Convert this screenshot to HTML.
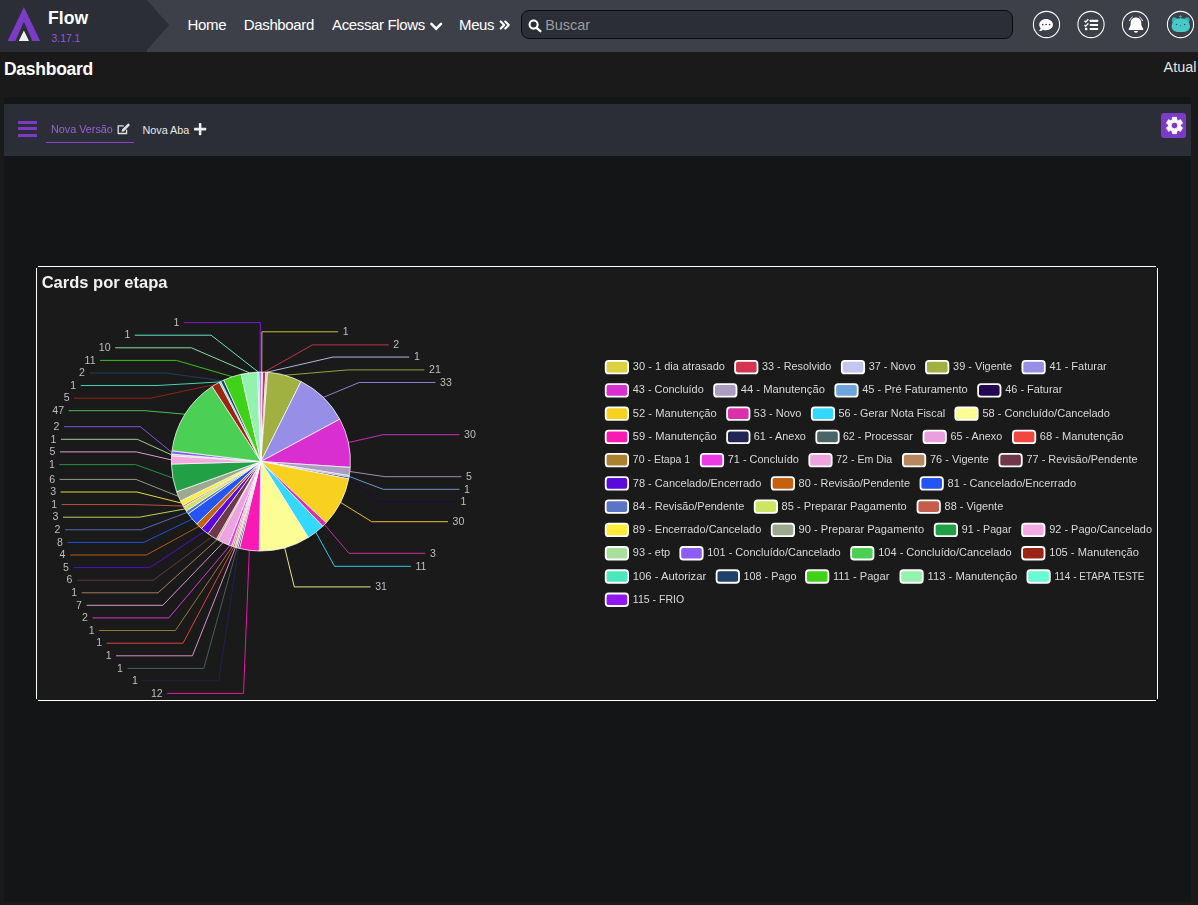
<!DOCTYPE html>
<html lang="pt-br">
<head>
<meta charset="utf-8">
<title>Flow - Dashboard</title>
<style>
*{box-sizing:border-box;margin:0;padding:0}
html,body{width:1198px;height:905px;overflow:hidden;background:#1a1a1a;font-family:"Liberation Sans",sans-serif;color:#fff}
body{position:relative}
.header{position:absolute;left:0;top:0;width:1198px;height:52px;background:#3d4049}
.brand{position:absolute;left:0;top:0;width:170px;height:52px}
.brand-name{position:absolute;left:48px;top:8.3px;font-size:17.6px;font-weight:bold;color:#fff;line-height:20px}
.brand-ver{position:absolute;left:51.5px;top:33px;font-size:10.4px;color:#9256d8;line-height:12px}
.nav{position:absolute;top:0;height:52px;line-height:49.6px;font-size:15px;letter-spacing:-0.36px;color:#fff;white-space:nowrap}
.search{position:absolute;left:521px;top:10px;width:492px;height:29px;border:1px solid #0c0c0e;border-radius:8px;background:#2b2e37}
.search span{position:absolute;left:23.2px;top:0;line-height:28px;font-size:14.4px;color:#9b9b9b}
.circ{position:absolute;top:11px;width:27px;height:27px;border:1.5px solid #fff;border-radius:50%}
.ptitle{position:absolute;left:4px;top:59.3px;font-size:17.5px;letter-spacing:-0.27px;font-weight:bold;line-height:20px;color:#fff}
.atual{position:absolute;right:1.6px;top:58px;font-size:14.4px;line-height:18px;color:#e4e4e4}
.wrap{position:absolute;left:4px;top:97px;width:1187px;height:805px;background:#141517}
.toolbar{position:absolute;left:4px;top:104px;width:1187px;height:52px;background:#2b2e37}
.tab1{position:absolute;left:50.5px;top:122px;font-size:10.8px;line-height:14px;color:#9862d0;white-space:nowrap;will-change:transform}
.tab1u{position:absolute;left:46px;top:142px;width:88px;height:1px;background:#8a44d0}
.tab2{position:absolute;left:142.5px;top:123px;font-size:10.8px;line-height:14px;color:#e8e8e8;white-space:nowrap}
.gear{position:absolute;left:1161px;top:113px;width:25px;height:25px;border-radius:3px;background:#7c3bc6}
.card{position:absolute;left:36px;top:266px;width:1122px;height:435px;border-radius:3px;background:#1a1a1a}
.bl{position:absolute;background:#fff}
svg.chart{position:absolute;left:0;top:0;will-change:transform}
svg.ico{position:absolute;overflow:visible}
</style>
</head>
<body>
<div class="header">
  <svg class="brand" viewBox="0 0 170 52">
    <polygon points="0,0 147,0 169,25 147,50 147,52 0,52" fill="#2b2e37"/>
    <polygon points="23.9,7 40.2,41 32.4,41 23.9,21.8 15.4,41 7.6,41" fill="#7c3bc6"/>
    <polygon points="23.9,30.4 29,41 18.8,41" fill="#f0f0f0"/>
  </svg>
  <div class="brand-name">Flow</div>
  <div class="brand-ver">3.17.1</div>
  <div class="nav" style="left:187.6px">Home</div>
  <div class="nav" style="left:243.8px">Dashboard</div>
  <div class="nav" style="left:332px">Acessar Flows</div>
  <div class="nav" style="left:459px">Meus</div>
  <div class="search">
    <span>Buscar</span>
  </div>
<svg class="ico" style="left:0;top:0" width="1198" height="52" viewBox="0 0 1198 52">
<polyline points="431.4,23.9 436.2,28.7 441,23.9" fill="none" stroke="#fff" stroke-width="2.5" stroke-linecap="round" stroke-linejoin="miter"/>
<g fill="none" stroke="#fff" stroke-width="2.1" stroke-linecap="round" stroke-linejoin="round"><polyline points="500.7,21.5 504.2,25 500.7,28.500"/><polyline points="505.3,21.5 508.8,25 505.3,28.500"/></g>
<circle cx="533.6" cy="24.6" r="4.05" fill="none" stroke="#fff" stroke-width="2.1"/><line x1="536.5" y1="27.9" x2="540.4" y2="31.200" stroke="#fff" stroke-width="2.300" stroke-linecap="round"/>
<g fill="none" stroke="#fff" stroke-width="1.05"><circle cx="1046.5" cy="24.5" r="13.1"/><circle cx="1091" cy="24.5" r="13.1"/><circle cx="1135.5" cy="24.5" r="13.1"/><circle cx="1180.5" cy="24.5" r="13.1"/></g>
<path transform="translate(1039.2 18.1) scale(0.02695)" fill="#fff" fill-rule="evenodd" d="M256 32C114.6 32 0 125.1 0 240c0 49.6 21.4 95 57 130.7C44.5 421.1 2.7 466 2.2 466.5c-2.200 2.300-2.800 5.700-1.500 8.700S4.800 480 8 480c66.300 0 116-31.800 140.600-51.400 32.700 12.300 69 19.400 107.400 19.400 141.400 0 256-93.100 256-208S397.400 32 256 32zM128 272c-17.700 0-32-14.300-32-32s14.300-32 32-32 32 14.300 32 32-14.300 32-32 32zm128 0c-17.700 0-32-14.300-32-32s14.300-32 32-32 32 14.300 32 32-14.300 32-32 32zm128 0c-17.700 0-32-14.300-32-32s14.300-32 32-32 32 14.300 32 32-14.300 32-32 32z"/>
<g fill="#fff"><rect x="1089.700" y="19.800" width="8.400" height="2.100" rx="0.400"/><rect x="1089.700" y="23.900" width="8.400" height="2.100" rx="0.400"/><rect x="1089.700" y="28" width="8.400" height="2.100" rx="0.400"/><rect x="1084.900" y="27.800" width="2.500" height="2.500" rx="1"/></g>
<g fill="none" stroke="#fff" stroke-width="1.400"><polyline points="1084.500,20.800 1085.800,22.100 1088.300,19.300"/><polyline points="1084.500,24.900 1085.800,26.200 1088.300,23.400"/></g>
<path d="M1136 17.400c-3.100 0-5.300 2.200-5.300 5.100c0 3.100-0.600 4.400-1.500 5.500c-0.400 0.500-0.600 0.900-0.600 1.300c0 0.500 0.300 0.800 0.800 0.800h13.200c0.500 0 0.800-0.300 0.800-0.800c0-0.400-0.200-0.800-0.600-1.300c-0.900-1.100-1.500-2.400-1.500-5.500c0-2.900-2.200-5.100-5.300-5.100z" fill="#fff"/>
<path d="M1133.900 31a2.100 1.800 0 0 0 4.200 0z" fill="#fff"/>
<path d="M1129.300 21.100a8 8 0 0 1 3.400-4.300" fill="none" stroke="#fff" stroke-width="0.900"/><path d="M1139.300 16.800a8 8 0 0 1 3.400 4.300" fill="none" stroke="#fff" stroke-width="0.900"/>
<circle cx="1174.400" cy="19.900" r="2.600" fill="#36adb0"/><circle cx="1187.100" cy="19.900" r="2.600" fill="#36adb0"/>
<path d="M1180.400 15v3.500M1178.900 16.500l3 0" stroke="#3bbab8" stroke-width="0.800" fill="none"/>
<path d="M1171.600 26.400C1171.600 21.400 1175.500 18.200 1180.700 18.200C1185.900 18.200 1189.900 21.400 1189.900 26.400C1189.900 30.500 1186 32.100 1180.700 32.100C1175.400 32.100 1171.600 30.500 1171.600 26.400Z" fill="#47c9c7"/>
<circle cx="1176.500" cy="24.600" r="0.750" fill="#1f5558"/><circle cx="1184.600" cy="24.600" r="0.750" fill="#1f5558"/><path d="M1179.800 25.500h1.500l-0.750 1z" fill="#1f4548"/>
</svg>
</div>
<div class="ptitle">Dashboard</div>
<div class="atual">Atual</div>
<div class="wrap"></div>
<div class="toolbar"></div>
<svg class="ico" style="left:18px;top:121px" width="19" height="16" viewBox="0 0 19 16"><rect x="0" y="0" width="19" height="3" rx="0.600" fill="#7c3bc6"/><rect x="0" y="6" width="19" height="3" rx="0.600" fill="#7c3bc6"/><rect x="0" y="13" width="19" height="3" rx="0.600" fill="#7c3bc6"/></svg>
<div class="tab1">Nova Versão</div>
<svg class="ico" style="left:116.500px;top:123px" width="14" height="12" viewBox="0 0 14 12"><path d="M9.600 7.200v3.300H1.200V2.900h5" fill="none" stroke="#e2e2e2" stroke-width="1.300" stroke-linejoin="round" stroke-linecap="round"/><path d="M5 6.600L10.800 0.800c0.300-0.300 0.700-0.300 1 0l0.800 0.800c0.300 0.300 0.300 0.700 0 1L6.800 8.400l-2.200 0.400z" fill="#e2e2e2"/></svg>
<div class="tab1u"></div>
<div class="tab2">Nova Aba</div>
<svg class="ico" style="left:194.100px;top:122.900px" width="12.250" height="12.250" viewBox="0 0 12.250 12.250"><rect x="4.850" y="0" width="2.550" height="12.250" rx="0.700" fill="#ececec"/><rect x="0" y="4.850" width="12.250" height="2.550" rx="0.700" fill="#ececec"/></svg>
<div class="gear">
  <svg class="ico" style="left:4.500px;top:3.800px" width="17" height="17" viewBox="-8.500 -8.500 17 17"><path d="M-2.29 -5.66L-2.03 -8.15L2.03 -8.15L2.29 -5.66L3.76 -4.81L6.04 -5.84L8.07 -2.32L6.04 -0.85L6.04 0.85L8.07 2.32L6.04 5.84L3.76 4.81L2.29 5.66L2.03 8.15L-2.03 8.15L-2.29 5.66L-3.76 4.81L-6.04 5.84L-8.07 2.32L-6.04 0.85L-6.04 -0.85L-8.07 -2.32L-6.04 -5.84L-3.76 -4.81ZM3.3 0A3.3 3.3 0 1 0 -3.3 0A3.3 3.3 0 1 0 3.3 0Z" fill="#fff" fill-rule="evenodd" stroke="#fff" stroke-width="0.8" stroke-linejoin="round"/></svg>
</div>
<div class="card"></div>
<div class="bl" style="left:38px;top:266px;width:1118px;height:1px"></div><div class="bl" style="left:38px;top:700px;width:1118px;height:1px"></div><div class="bl" style="left:36px;top:268px;width:1px;height:431px"></div><div class="bl" style="left:1157px;top:268px;width:1px;height:431px"></div>
<svg class="chart" width="1198" height="905" viewBox="0 0 1198 905">
<g fill="none" stroke-width="1" stroke-opacity="0.9">
<polyline points="261.73,372.05 261.90,331.80 338.20,331.80" stroke="#ddd041"/>
<polyline points="264.23,372.11 312.40,344.90 388.70,344.90" stroke="#d43651"/>
<polyline points="266.72,372.24 333.00,357.05 409.30,357.05" stroke="#c3c6ef"/>
<polyline points="284.73,375.28 348.10,369.90 424.40,369.90" stroke="#a0b142"/>
<polyline points="323.30,397.39 359.10,382.50 435.40,382.50" stroke="#978ee8"/>
<polyline points="348.36,442.56 383.10,434.70 459.40,434.70" stroke="#d92fd0"/>
<polyline points="349.84,471.51 385.10,476.70 461.40,476.70" stroke="#ab9cc1"/>
<polyline points="349.15,476.45 383.10,489.30 459.40,489.30" stroke="#6da6dc"/>
<polyline points="348.86,478.09 379.70,502.10 456.00,502.10" stroke="#220654"/>
<polyline points="340.53,502.40 371.70,521.70 448.00,521.70" stroke="#f8d020"/>
<polyline points="324.48,524.54 349.00,553.30 425.30,553.30" stroke="#dc2fa9"/>
<polyline points="315.77,532.26 334.60,566.30 410.90,566.30" stroke="#34d8fc"/>
<polyline points="284.73,547.82 294.30,586.90 370.60,586.90" stroke="#fcfd94"/>
<polyline points="249.29,550.29 243.50,693.40 167.20,693.40" stroke="#f919b5"/>
<polyline points="238.67,548.25 218.70,680.80 142.40,680.80" stroke="#1f2555"/>
<polyline points="237.07,547.82 203.80,668.40 127.50,668.40" stroke="#4b6567"/>
<polyline points="235.47,547.36 192.40,655.80 116.10,655.80" stroke="#ea9fde"/>
<polyline points="233.88,546.87 183.00,643.20 106.70,643.20" stroke="#f2473e"/>
<polyline points="232.30,546.36 175.40,630.50 99.10,630.50" stroke="#a9812f"/>
<polyline points="229.94,545.53 168.80,617.90 92.50,617.90" stroke="#ec3be6"/>
<polyline points="223.03,542.65 162.80,605.30 86.50,605.30" stroke="#eca3e0"/>
<polyline points="217.11,539.61 158.00,592.80 81.70,592.80" stroke="#b78760"/>
<polyline points="212.13,536.60 153.30,580.20 77.00,580.20" stroke="#6f3848"/>
<polyline points="204.73,531.23 149.80,567.60 73.50,567.60" stroke="#5a0bdb"/>
<polyline points="199.10,526.29 146.30,555.00 70.00,555.00" stroke="#c4600f"/>
<polyline points="192.28,519.01 143.70,542.40 67.40,542.40" stroke="#2255f1"/>
<polyline points="187.24,512.39 141.30,529.80 65.00,529.80" stroke="#5b74c4"/>
<polyline points="184.96,508.92 139.30,517.20 63.00,517.20" stroke="#cde565"/>
<polyline points="183.25,506.06 137.90,504.60 61.60,504.60" stroke="#c65c4b"/>
<polyline points="181.65,503.14 136.90,492.00 60.60,492.00" stroke="#fded3a"/>
<polyline points="178.45,496.38 135.90,479.40 59.60,479.40" stroke="#9ba990"/>
<polyline points="172.94,478.09 135.70,464.60 59.40,464.60" stroke="#21a045"/>
<polyline points="171.42,459.89 136.30,451.90 60.00,451.90" stroke="#f4a9e3"/>
<polyline points="171.65,454.90 137.30,439.30 61.00,439.30" stroke="#aae19a"/>
<polyline points="171.87,452.42 140.30,426.70 64.00,426.70" stroke="#8b5cf6"/>
<polyline points="184.96,414.18 144.90,410.70 68.60,410.70" stroke="#4bd055"/>
<polyline points="215.67,384.32 150.40,398.20 74.10,398.20" stroke="#9c2414"/>
<polyline points="220.05,381.92 157.00,385.50 80.70,385.50" stroke="#4be8bd"/>
<polyline points="222.28,380.81 165.80,373.00 89.50,373.00" stroke="#1f4068"/>
<polyline points="232.30,376.74 176.40,360.40 100.10,360.40" stroke="#3ed316"/>
<polyline points="249.29,372.81 191.40,347.80 115.10,347.80" stroke="#93f2ae"/>
<polyline points="258.40,372.08 211.10,335.20 134.80,335.20" stroke="#69fbd3"/>
<polyline points="260.07,372.05 260.30,322.60 184.00,322.60" stroke="#9018ef"/>
</g>
<g>
<path d="M260.9 461.55L260.90 372.05A89.5 89.5 0 0 1 262.56 372.07Z" fill="#ddd041" stroke="#fff" stroke-width="0.75" stroke-linejoin="round"/>
<path d="M260.9 461.55L262.56 372.07A89.5 89.5 0 0 1 265.89 372.19Z" fill="#d43651" stroke="#fff" stroke-width="0.75" stroke-linejoin="round"/>
<path d="M260.9 461.55L265.89 372.19A89.5 89.5 0 0 1 267.55 372.30Z" fill="#c3c6ef" stroke="#fff" stroke-width="0.75" stroke-linejoin="round"/>
<path d="M260.9 461.55L267.55 372.30A89.5 89.5 0 0 1 301.01 381.54Z" fill="#a0b142" stroke="#fff" stroke-width="0.75" stroke-linejoin="round"/>
<path d="M260.9 461.55L301.01 381.54A89.5 89.5 0 0 1 339.76 419.22Z" fill="#978ee8" stroke="#fff" stroke-width="0.75" stroke-linejoin="round"/>
<path d="M260.9 461.55L339.76 419.22A89.5 89.5 0 0 1 350.21 467.37Z" fill="#d92fd0" stroke="#fff" stroke-width="0.75" stroke-linejoin="round"/>
<path d="M260.9 461.55L350.21 467.37A89.5 89.5 0 0 1 349.29 475.63Z" fill="#ab9cc1" stroke="#fff" stroke-width="0.75" stroke-linejoin="round"/>
<path d="M260.9 461.55L349.29 475.63A89.5 89.5 0 0 1 349.01 477.27Z" fill="#6da6dc" stroke="#fff" stroke-width="0.75" stroke-linejoin="round"/>
<path d="M260.9 461.55L349.01 477.27A89.5 89.5 0 0 1 348.70 478.91Z" fill="#220654" stroke="#fff" stroke-width="0.75" stroke-linejoin="round"/>
<path d="M260.9 461.55L348.70 478.91A89.5 89.5 0 0 1 326.21 522.74Z" fill="#f8d020" stroke="#fff" stroke-width="0.75" stroke-linejoin="round"/>
<path d="M260.9 461.55L326.21 522.74A89.5 89.5 0 0 1 322.70 526.29Z" fill="#dc2fa9" stroke="#fff" stroke-width="0.75" stroke-linejoin="round"/>
<path d="M260.9 461.55L322.70 526.29A89.5 89.5 0 0 1 308.27 537.49Z" fill="#34d8fc" stroke="#fff" stroke-width="0.75" stroke-linejoin="round"/>
<path d="M260.9 461.55L308.27 537.49A89.5 89.5 0 0 1 259.24 551.03Z" fill="#fcfd94" stroke="#fff" stroke-width="0.75" stroke-linejoin="round"/>
<path d="M260.9 461.55L259.24 551.03A89.5 89.5 0 0 1 239.48 548.45Z" fill="#f919b5" stroke="#fff" stroke-width="0.75" stroke-linejoin="round"/>
<path d="M260.9 461.55L239.48 548.45A89.5 89.5 0 0 1 237.87 548.04Z" fill="#1f2555" stroke="#fff" stroke-width="0.75" stroke-linejoin="round"/>
<path d="M260.9 461.55L237.87 548.04A89.5 89.5 0 0 1 236.27 547.59Z" fill="#4b6567" stroke="#fff" stroke-width="0.75" stroke-linejoin="round"/>
<path d="M260.9 461.55L236.27 547.59A89.5 89.5 0 0 1 234.67 547.12Z" fill="#ea9fde" stroke="#fff" stroke-width="0.75" stroke-linejoin="round"/>
<path d="M260.9 461.55L234.67 547.12A89.5 89.5 0 0 1 233.08 546.62Z" fill="#f2473e" stroke="#fff" stroke-width="0.75" stroke-linejoin="round"/>
<path d="M260.9 461.55L233.08 546.62A89.5 89.5 0 0 1 231.51 546.09Z" fill="#a9812f" stroke="#fff" stroke-width="0.75" stroke-linejoin="round"/>
<path d="M260.9 461.55L231.51 546.09A89.5 89.5 0 0 1 228.39 544.94Z" fill="#ec3be6" stroke="#fff" stroke-width="0.75" stroke-linejoin="round"/>
<path d="M260.9 461.55L228.39 544.94A89.5 89.5 0 0 1 217.84 540.01Z" fill="#eca3e0" stroke="#fff" stroke-width="0.75" stroke-linejoin="round"/>
<path d="M260.9 461.55L217.84 540.01A89.5 89.5 0 0 1 216.39 539.20Z" fill="#b78760" stroke="#fff" stroke-width="0.75" stroke-linejoin="round"/>
<path d="M260.9 461.55L216.39 539.20A89.5 89.5 0 0 1 208.02 533.76Z" fill="#6f3848" stroke="#fff" stroke-width="0.75" stroke-linejoin="round"/>
<path d="M260.9 461.55L208.02 533.76A89.5 89.5 0 0 1 201.55 528.54Z" fill="#5a0bdb" stroke="#fff" stroke-width="0.75" stroke-linejoin="round"/>
<path d="M260.9 461.55L201.55 528.54A89.5 89.5 0 0 1 196.74 523.95Z" fill="#c4600f" stroke="#fff" stroke-width="0.75" stroke-linejoin="round"/>
<path d="M260.9 461.55L196.74 523.95A89.5 89.5 0 0 1 188.20 513.75Z" fill="#2255f1" stroke="#fff" stroke-width="0.75" stroke-linejoin="round"/>
<path d="M260.9 461.55L188.20 513.75A89.5 89.5 0 0 1 186.31 511.01Z" fill="#5b74c4" stroke="#fff" stroke-width="0.75" stroke-linejoin="round"/>
<path d="M260.9 461.55L186.31 511.01A89.5 89.5 0 0 1 183.67 506.78Z" fill="#cde565" stroke="#fff" stroke-width="0.75" stroke-linejoin="round"/>
<path d="M260.9 461.55L183.67 506.78A89.5 89.5 0 0 1 182.84 505.34Z" fill="#c65c4b" stroke="#fff" stroke-width="0.75" stroke-linejoin="round"/>
<path d="M260.9 461.55L182.84 505.34A89.5 89.5 0 0 1 180.52 500.92Z" fill="#fded3a" stroke="#fff" stroke-width="0.75" stroke-linejoin="round"/>
<path d="M260.9 461.55L180.52 500.92A89.5 89.5 0 0 1 176.64 491.73Z" fill="#9ba990" stroke="#fff" stroke-width="0.75" stroke-linejoin="round"/>
<path d="M260.9 461.55L176.64 491.73A89.5 89.5 0 0 1 171.43 464.05Z" fill="#21a045" stroke="#fff" stroke-width="0.75" stroke-linejoin="round"/>
<path d="M260.9 461.55L171.43 464.05A89.5 89.5 0 0 1 171.59 455.73Z" fill="#f4a9e3" stroke="#fff" stroke-width="0.75" stroke-linejoin="round"/>
<path d="M260.9 461.55L171.59 455.73A89.5 89.5 0 0 1 171.71 454.07Z" fill="#aae19a" stroke="#fff" stroke-width="0.75" stroke-linejoin="round"/>
<path d="M260.9 461.55L171.71 454.07A89.5 89.5 0 0 1 172.05 450.76Z" fill="#8b5cf6" stroke="#fff" stroke-width="0.75" stroke-linejoin="round"/>
<path d="M260.9 461.55L172.05 450.76A89.5 89.5 0 0 1 212.13 386.50Z" fill="#4bd055" stroke="#fff" stroke-width="0.75" stroke-linejoin="round"/>
<path d="M260.9 461.55L212.13 386.50A89.5 89.5 0 0 1 219.31 382.30Z" fill="#9c2414" stroke="#fff" stroke-width="0.75" stroke-linejoin="round"/>
<path d="M260.9 461.55L219.31 382.30A89.5 89.5 0 0 1 220.79 381.54Z" fill="#4be8bd" stroke="#fff" stroke-width="0.75" stroke-linejoin="round"/>
<path d="M260.9 461.55L220.79 381.54A89.5 89.5 0 0 1 223.79 380.11Z" fill="#1f4068" stroke="#fff" stroke-width="0.75" stroke-linejoin="round"/>
<path d="M260.9 461.55L223.79 380.11A89.5 89.5 0 0 1 241.10 374.27Z" fill="#3ed316" stroke="#fff" stroke-width="0.75" stroke-linejoin="round"/>
<path d="M260.9 461.55L241.10 374.27A89.5 89.5 0 0 1 257.57 372.11Z" fill="#93f2ae" stroke="#fff" stroke-width="0.75" stroke-linejoin="round"/>
<path d="M260.9 461.55L257.57 372.11A89.5 89.5 0 0 1 259.24 372.07Z" fill="#69fbd3" stroke="#fff" stroke-width="0.75" stroke-linejoin="round"/>
<path d="M260.9 461.55L259.24 372.07A89.5 89.5 0 0 1 260.90 372.05Z" fill="#9018ef" stroke="#fff" stroke-width="0.75" stroke-linejoin="round"/>
</g>
<g font-family="Liberation Sans, sans-serif" font-size="10.6" fill="#bebebe">
<text x="342.8" y="335.00">1</text>
<text x="393.3" y="348.10">2</text>
<text x="413.9" y="360.25">1</text>
<text x="429.0" y="373.10">21</text>
<text x="440.0" y="385.70">33</text>
<text x="464.0" y="437.90">30</text>
<text x="466.0" y="479.90">5</text>
<text x="464.0" y="492.50">1</text>
<text x="460.6" y="505.30">1</text>
<text x="452.6" y="524.90">30</text>
<text x="429.9" y="556.50">3</text>
<text x="415.5" y="569.50">11</text>
<text x="375.2" y="590.10">31</text>
<text x="162.7" y="696.60" text-anchor="end">12</text>
<text x="137.9" y="684.00" text-anchor="end">1</text>
<text x="123.0" y="671.60" text-anchor="end">1</text>
<text x="111.6" y="659.00" text-anchor="end">1</text>
<text x="102.2" y="646.40" text-anchor="end">1</text>
<text x="94.6" y="633.70" text-anchor="end">1</text>
<text x="88.0" y="621.10" text-anchor="end">2</text>
<text x="82.0" y="608.50" text-anchor="end">7</text>
<text x="77.2" y="596.00" text-anchor="end">1</text>
<text x="72.5" y="583.40" text-anchor="end">6</text>
<text x="69.0" y="570.80" text-anchor="end">5</text>
<text x="65.5" y="558.20" text-anchor="end">4</text>
<text x="62.9" y="545.60" text-anchor="end">8</text>
<text x="60.5" y="533.00" text-anchor="end">2</text>
<text x="58.5" y="520.40" text-anchor="end">3</text>
<text x="57.1" y="507.80" text-anchor="end">1</text>
<text x="56.1" y="495.20" text-anchor="end">3</text>
<text x="55.1" y="482.60" text-anchor="end">6</text>
<text x="54.9" y="467.80" text-anchor="end">1</text>
<text x="55.5" y="455.10" text-anchor="end">5</text>
<text x="56.5" y="442.50" text-anchor="end">1</text>
<text x="59.5" y="429.90" text-anchor="end">2</text>
<text x="64.1" y="413.90" text-anchor="end">47</text>
<text x="69.6" y="401.40" text-anchor="end">5</text>
<text x="76.2" y="388.70" text-anchor="end">1</text>
<text x="85.0" y="376.20" text-anchor="end">2</text>
<text x="95.6" y="363.60" text-anchor="end">11</text>
<text x="110.6" y="351.00" text-anchor="end">10</text>
<text x="130.3" y="338.40" text-anchor="end">1</text>
<text x="179.5" y="325.80" text-anchor="end">1</text>
</g>
<g font-family="Liberation Sans, sans-serif" font-size="11.5" fill="#d8d8d8">
<rect x="605.7" y="360.90" width="22.4" height="12.5" rx="3" fill="#ddd041" stroke="#fff" stroke-width="1.8"/>
<text x="632.8" y="370.20" textLength="92.2" lengthAdjust="spacingAndGlyphs">30 - 1 dia atrasado</text>
<rect x="735.1" y="360.90" width="22.4" height="12.5" rx="3" fill="#d43651" stroke="#fff" stroke-width="1.8"/>
<text x="762.0" y="370.20" textLength="69.4" lengthAdjust="spacingAndGlyphs">33 - Resolvido</text>
<rect x="841.8" y="360.90" width="22.4" height="12.5" rx="3" fill="#c3c6ef" stroke="#fff" stroke-width="1.8"/>
<text x="868.7" y="370.20" textLength="47.1" lengthAdjust="spacingAndGlyphs">37 - Novo</text>
<rect x="926.0" y="360.90" width="22.4" height="12.5" rx="3" fill="#a0b142" stroke="#fff" stroke-width="1.8"/>
<text x="953.1" y="370.20" textLength="58.9" lengthAdjust="spacingAndGlyphs">39 - Vigente</text>
<rect x="1022.4" y="360.90" width="22.4" height="12.5" rx="3" fill="#978ee8" stroke="#fff" stroke-width="1.8"/>
<text x="1049.5" y="370.20" textLength="57.1" lengthAdjust="spacingAndGlyphs">41 - Faturar</text>
<rect x="605.7" y="384.16" width="22.4" height="12.5" rx="3" fill="#d92fd0" stroke="#fff" stroke-width="1.8"/>
<text x="632.8" y="393.46" textLength="70.9" lengthAdjust="spacingAndGlyphs">43 - Concluído</text>
<rect x="714.1" y="384.16" width="22.4" height="12.5" rx="3" fill="#ab9cc1" stroke="#fff" stroke-width="1.8"/>
<text x="740.8" y="393.46" textLength="84.1" lengthAdjust="spacingAndGlyphs">44 - Manutenção</text>
<rect x="835.3" y="384.16" width="22.4" height="12.5" rx="3" fill="#6da6dc" stroke="#fff" stroke-width="1.8"/>
<text x="862.2" y="393.46" textLength="105.5" lengthAdjust="spacingAndGlyphs">45 - Pré Faturamento</text>
<rect x="978.1" y="384.16" width="22.4" height="12.5" rx="3" fill="#220654" stroke="#fff" stroke-width="1.8"/>
<text x="1005.2" y="393.46" textLength="57.1" lengthAdjust="spacingAndGlyphs">46 - Faturar</text>
<rect x="605.7" y="407.42" width="22.4" height="12.5" rx="3" fill="#f8d020" stroke="#fff" stroke-width="1.8"/>
<text x="632.8" y="416.72" textLength="83.9" lengthAdjust="spacingAndGlyphs">52 - Manutenção</text>
<rect x="727.1" y="407.42" width="22.4" height="12.5" rx="3" fill="#dc2fa9" stroke="#fff" stroke-width="1.8"/>
<text x="753.8" y="416.72" textLength="47.6" lengthAdjust="spacingAndGlyphs">53 - Novo</text>
<rect x="811.8" y="407.42" width="22.4" height="12.5" rx="3" fill="#34d8fc" stroke="#fff" stroke-width="1.8"/>
<text x="838.4" y="416.72" textLength="106.7" lengthAdjust="spacingAndGlyphs">56 - Gerar Nota Fiscal</text>
<rect x="955.3" y="407.42" width="22.4" height="12.5" rx="3" fill="#fcfd94" stroke="#fff" stroke-width="1.8"/>
<text x="982.4" y="416.72" textLength="127.5" lengthAdjust="spacingAndGlyphs">58 - Concluído/Cancelado</text>
<rect x="605.7" y="430.68" width="22.4" height="12.5" rx="3" fill="#f919b5" stroke="#fff" stroke-width="1.8"/>
<text x="632.8" y="439.98" textLength="83.9" lengthAdjust="spacingAndGlyphs">59 - Manutenção</text>
<rect x="727.1" y="430.68" width="22.4" height="12.5" rx="3" fill="#1f2555" stroke="#fff" stroke-width="1.8"/>
<text x="753.8" y="439.98" textLength="52.1" lengthAdjust="spacingAndGlyphs">61 - Anexo</text>
<rect x="816.3" y="430.68" width="22.4" height="12.5" rx="3" fill="#4b6567" stroke="#fff" stroke-width="1.8"/>
<text x="842.9" y="439.98" textLength="69.9" lengthAdjust="spacingAndGlyphs">62 - Processar</text>
<rect x="923.5" y="430.68" width="22.4" height="12.5" rx="3" fill="#ea9fde" stroke="#fff" stroke-width="1.8"/>
<text x="950.6" y="439.98" textLength="51.6" lengthAdjust="spacingAndGlyphs">65 - Anexo</text>
<rect x="1012.9" y="430.68" width="22.4" height="12.5" rx="3" fill="#f2473e" stroke="#fff" stroke-width="1.8"/>
<text x="1039.8" y="439.98" textLength="83.6" lengthAdjust="spacingAndGlyphs">68 - Manutenção</text>
<rect x="605.7" y="453.94" width="22.4" height="12.5" rx="3" fill="#a9812f" stroke="#fff" stroke-width="1.8"/>
<text x="632.8" y="463.24" textLength="57.4" lengthAdjust="spacingAndGlyphs">70 - Etapa 1</text>
<rect x="700.8" y="453.94" width="22.4" height="12.5" rx="3" fill="#ec3be6" stroke="#fff" stroke-width="1.8"/>
<text x="727.7" y="463.24" textLength="71.2" lengthAdjust="spacingAndGlyphs">71 - Concluído</text>
<rect x="809.3" y="453.94" width="22.4" height="12.5" rx="3" fill="#eca3e0" stroke="#fff" stroke-width="1.8"/>
<text x="836.2" y="463.24" textLength="56.0" lengthAdjust="spacingAndGlyphs">72 - Em Dia</text>
<rect x="902.9" y="453.94" width="22.4" height="12.5" rx="3" fill="#b78760" stroke="#fff" stroke-width="1.8"/>
<text x="930.0" y="463.24" textLength="58.9" lengthAdjust="spacingAndGlyphs">76 - Vigente</text>
<rect x="999.4" y="453.94" width="22.4" height="12.5" rx="3" fill="#6f3848" stroke="#fff" stroke-width="1.8"/>
<text x="1026.5" y="463.24" textLength="111.0" lengthAdjust="spacingAndGlyphs">77 - Revisão/Pendente</text>
<rect x="605.7" y="477.20" width="22.4" height="12.5" rx="3" fill="#5a0bdb" stroke="#fff" stroke-width="1.8"/>
<text x="632.8" y="486.50" textLength="128.5" lengthAdjust="spacingAndGlyphs">78 - Cancelado/Encerrado</text>
<rect x="771.7" y="477.20" width="22.4" height="12.5" rx="3" fill="#c4600f" stroke="#fff" stroke-width="1.8"/>
<text x="798.6" y="486.50" textLength="111.4" lengthAdjust="spacingAndGlyphs">80 - Revisão/Pendente</text>
<rect x="920.5" y="477.20" width="22.4" height="12.5" rx="3" fill="#2255f1" stroke="#fff" stroke-width="1.8"/>
<text x="947.6" y="486.50" textLength="128.5" lengthAdjust="spacingAndGlyphs">81 - Cancelado/Encerrado</text>
<rect x="605.7" y="500.46" width="22.4" height="12.5" rx="3" fill="#5b74c4" stroke="#fff" stroke-width="1.8"/>
<text x="632.8" y="509.76" textLength="111.5" lengthAdjust="spacingAndGlyphs">84 - Revisão/Pendente</text>
<rect x="754.7" y="500.46" width="22.4" height="12.5" rx="3" fill="#cde565" stroke="#fff" stroke-width="1.8"/>
<text x="781.6" y="509.76" textLength="125.2" lengthAdjust="spacingAndGlyphs">85 - Preparar Pagamento</text>
<rect x="917.5" y="500.46" width="22.4" height="12.5" rx="3" fill="#c65c4b" stroke="#fff" stroke-width="1.8"/>
<text x="944.6" y="509.76" textLength="58.6" lengthAdjust="spacingAndGlyphs">88 - Vigente</text>
<rect x="605.7" y="523.72" width="22.4" height="12.5" rx="3" fill="#fded3a" stroke="#fff" stroke-width="1.8"/>
<text x="632.8" y="533.02" textLength="128.5" lengthAdjust="spacingAndGlyphs">89 - Encerrado/Cancelado</text>
<rect x="771.7" y="523.72" width="22.4" height="12.5" rx="3" fill="#9ba990" stroke="#fff" stroke-width="1.8"/>
<text x="798.6" y="533.02" textLength="125.5" lengthAdjust="spacingAndGlyphs">90 - Preparar Pagamento</text>
<rect x="934.7" y="523.72" width="22.4" height="12.5" rx="3" fill="#21a045" stroke="#fff" stroke-width="1.8"/>
<text x="961.8" y="533.02" textLength="49.7" lengthAdjust="spacingAndGlyphs">91 - Pagar</text>
<rect x="1022.1" y="523.72" width="22.4" height="12.5" rx="3" fill="#f4a9e3" stroke="#fff" stroke-width="1.8"/>
<text x="1049.2" y="533.02" textLength="102.8" lengthAdjust="spacingAndGlyphs">92 - Pago/Cancelado</text>
<rect x="605.7" y="546.98" width="22.4" height="12.5" rx="3" fill="#aae19a" stroke="#fff" stroke-width="1.8"/>
<text x="632.8" y="556.28" textLength="37.3" lengthAdjust="spacingAndGlyphs">93 - etp</text>
<rect x="680.3" y="546.98" width="22.4" height="12.5" rx="3" fill="#8b5cf6" stroke="#fff" stroke-width="1.8"/>
<text x="707.2" y="556.28" textLength="133.5" lengthAdjust="spacingAndGlyphs">101 - Concluído/Cancelado</text>
<rect x="851.1" y="546.98" width="22.4" height="12.5" rx="3" fill="#4bd055" stroke="#fff" stroke-width="1.8"/>
<text x="878.2" y="556.28" textLength="133.5" lengthAdjust="spacingAndGlyphs">104 - Concluído/Cancelado</text>
<rect x="1022.1" y="546.98" width="22.4" height="12.5" rx="3" fill="#9c2414" stroke="#fff" stroke-width="1.8"/>
<text x="1049.2" y="556.28" textLength="89.8" lengthAdjust="spacingAndGlyphs">105 - Manutenção</text>
<rect x="605.7" y="570.24" width="22.4" height="12.5" rx="3" fill="#4be8bd" stroke="#fff" stroke-width="1.8"/>
<text x="632.8" y="579.54" textLength="73.4" lengthAdjust="spacingAndGlyphs">106 - Autorizar</text>
<rect x="716.6" y="570.24" width="22.4" height="12.5" rx="3" fill="#1f4068" stroke="#fff" stroke-width="1.8"/>
<text x="743.6" y="579.54" textLength="52.8" lengthAdjust="spacingAndGlyphs">108 - Pago</text>
<rect x="806.0" y="570.24" width="22.4" height="12.5" rx="3" fill="#3ed316" stroke="#fff" stroke-width="1.8"/>
<text x="833.0" y="579.54" textLength="56.4" lengthAdjust="spacingAndGlyphs">111 - Pagar</text>
<rect x="900.4" y="570.24" width="22.4" height="12.5" rx="3" fill="#93f2ae" stroke="#fff" stroke-width="1.8"/>
<text x="927.5" y="579.54" textLength="89.7" lengthAdjust="spacingAndGlyphs">113 - Manutenção</text>
<rect x="1027.4" y="570.24" width="22.4" height="12.5" rx="3" fill="#69fbd3" stroke="#fff" stroke-width="1.8"/>
<text x="1054.5" y="579.54" textLength="90.0" lengthAdjust="spacingAndGlyphs">114 - ETAPA TESTE</text>
<rect x="605.7" y="593.50" width="22.4" height="12.5" rx="3" fill="#9018ef" stroke="#fff" stroke-width="1.8"/>
<text x="632.8" y="602.80" textLength="51.4" lengthAdjust="spacingAndGlyphs">115 - FRIO</text>
</g>
<text x="41.7" y="288.3" font-family="Liberation Sans, sans-serif" font-weight="bold" font-size="15.700" fill="#f2f2f2" textLength="125.8" lengthAdjust="spacingAndGlyphs">Cards por etapa</text>
</svg>
</body>
</html>
